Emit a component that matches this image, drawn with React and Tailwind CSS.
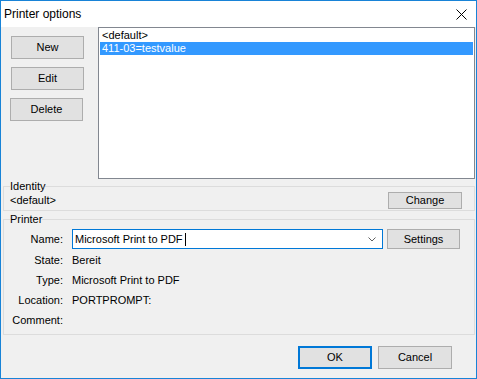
import React from "react";

function Btn({ children, className = "", primary = false }) {
  return (
    <div
      className={
        "flex items-center justify-center bg-[#e1e1e1] text-black " +
        (primary ? "border-2 border-[#0078d7] " : "border border-[#adadad] ") +
        className
      }
    >
      {children}
    </div>
  );
}

export default function App() {
  return (
    <div
      className="w-[477px] h-[379px] border border-[#1883d7] bg-[#f0f0f0] flex flex-col text-[11px] text-black overflow-hidden"
      style={{ fontFamily: '"Liberation Sans", Arial, sans-serif' }}
    >
      {/* Title bar */}
      <div className="h-[26px] bg-white flex items-center justify-between pl-[3px] pr-[9px] shrink-0">
        <span className="text-[12px] leading-[16px]">Printer options</span>
        <svg width="11" height="11" viewBox="0 0 11 11">
          <path d="M0.5 0.5 L10.5 10.5 M10.5 0.5 L0.5 10.5" stroke="#000" strokeWidth="1" fill="none" />
        </svg>
      </div>

      {/* Top row */}
      <div className="flex h-[152px] shrink-0">
        <div className="w-[97px] pt-[9px] pl-[10px] flex flex-col gap-[8px]">
          <Btn className="w-[73px] h-[23px]">New</Btn>
          <Btn className="w-[73px] h-[23px]">Edit</Btn>
          <Btn className="w-[73px] h-[23px] -ml-px">Delete</Btn>
        </div>
        <div className="w-[377px] h-[152px] border border-[#828790] bg-white pt-px px-px">
          <div className="h-[13px] leading-[13px] pl-[2px]">&lt;default&gt;</div>
          <div className="h-[13px] leading-[13px] pl-[2px] bg-[#3399ff] text-white">411-03=testvalue</div>
        </div>
      </div>

      {/* Identity group */}
      <div className="mt-[7px] ml-[2px] w-[472px] h-[25px] border border-[#dcdcdc] shrink-0">
        <div className="-mt-[7px] ml-[6px] w-fit h-[13px] leading-[13px] bg-[#f0f0f0]">Identity</div>
        <div className="-mt-px h-[17px] flex items-center">
          <span className="ml-[6px] leading-[13px]">&lt;default&gt;</span>
          <Btn className="ml-auto mr-[12px] w-[74px] h-[17px]">Change</Btn>
        </div>
      </div>

      {/* Printer group */}
      <div className="mt-[8px] ml-[2px] w-[472px] h-[116px] border border-[#dcdcdc] shrink-0">
        <div className="-mt-[7px] ml-[6px] w-fit h-[13px] leading-[13px] bg-[#f0f0f0]">Printer</div>
        <div className="mt-[3px] h-[20px] flex items-center">
          <span className="w-[59px] text-right">Name:</span>
          <div className="ml-[9px] w-[311px] h-[20px] border border-[#0078d7] bg-white flex items-center pl-[2px] pr-[6px]">
            <span className="leading-[13px]">Microsoft Print to PDF</span>
            <span className="ml-[2px] w-px h-[13px] bg-black"></span>
            <svg className="ml-auto" width="8" height="5" viewBox="0 0 8 5">
              <path d="M0.5 0.5 L4 4 L7.5 0.5" stroke="#606060" strokeWidth="1" fill="none" />
            </svg>
          </div>
          <Btn className="ml-[4px] w-[73px] h-[20px]">Settings</Btn>
        </div>
        <div className="mt-px flex flex-col">
          <div className="h-[20px] flex items-center">
            <span className="w-[59px] text-right">State:</span>
            <span className="ml-[9px]">Bereit</span>
          </div>
          <div className="h-[20px] flex items-center">
            <span className="w-[59px] text-right">Type:</span>
            <span className="ml-[9px]">Microsoft Print to PDF</span>
          </div>
          <div className="h-[20px] flex items-center">
            <span className="w-[59px] text-right">Location:</span>
            <span className="ml-[9px]">PORTPROMPT:</span>
          </div>
          <div className="h-[20px] flex items-center">
            <span className="w-[59px] text-right">Comment:</span>
          </div>
        </div>
      </div>

      {/* Bottom buttons */}
      <div className="mt-[11px] flex justify-end gap-[6px] pr-[24px] shrink-0">
        <Btn primary className="w-[74px] h-[23px]">OK</Btn>
        <Btn className="w-[74px] h-[23px]">Cancel</Btn>
      </div>
    </div>
  );
}
